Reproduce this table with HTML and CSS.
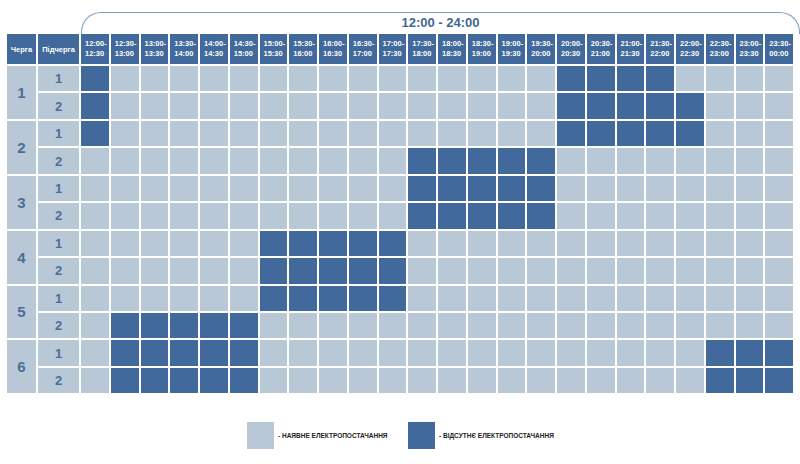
FILE: index.html
```html
<!DOCTYPE html>
<html lang="uk">
<head>
<meta charset="utf-8">
<link rel="stylesheet" href="styles.css">
</head>
<body>
<div class="page">
  <div class="bracket-row">
    <div class="bracket">12:00 - 24:00</div>
  </div>
  <div class="grid">
    <div class="h h-main">Черга</div>
    <div class="h h-main">Підчерга</div>
    <div class="h t">12:00-<br>12:30</div>
    <div class="h t">12:30-<br>13:00</div>
    <div class="h t">13:00-<br>13:30</div>
    <div class="h t">13:30-<br>14:00</div>
    <div class="h t">14:00-<br>14:30</div>
    <div class="h t">14:30-<br>15:00</div>
    <div class="h t">15:00-<br>15:30</div>
    <div class="h t">15:30-<br>16:00</div>
    <div class="h t">16:00-<br>16:30</div>
    <div class="h t">16:30-<br>17:00</div>
    <div class="h t">17:00-<br>17:30</div>
    <div class="h t">17:30-<br>18:00</div>
    <div class="h t">18:00-<br>18:30</div>
    <div class="h t">18:30-<br>19:00</div>
    <div class="h t">19:00-<br>19:30</div>
    <div class="h t">19:30-<br>20:00</div>
    <div class="h t">20:00-<br>20:30</div>
    <div class="h t">20:30-<br>21:00</div>
    <div class="h t">21:00-<br>21:30</div>
    <div class="h t">21:30-<br>22:00</div>
    <div class="h t">22:00-<br>22:30</div>
    <div class="h t">22:30-<br>23:00</div>
    <div class="h t">23:00-<br>23:30</div>
    <div class="h t">23:30-<br>00:00</div>

    <!-- 1.1 -->
    <div class="q">1</div>
    <div class="s">1</div>
    <span class="off"></span>
    <span class="on"></span><span class="on"></span><span class="on"></span><span class="on"></span><span class="on"></span>
    <span class="on"></span><span class="on"></span><span class="on"></span><span class="on"></span><span class="on"></span>
    <span class="on"></span><span class="on"></span><span class="on"></span><span class="on"></span><span class="on"></span>
    <span class="off"></span><span class="off"></span><span class="off"></span><span class="off"></span>
    <span class="on"></span><span class="on"></span><span class="on"></span><span class="on"></span>
    <!-- 1.2 -->
    <div class="s">2</div>
    <span class="off"></span>
    <span class="on"></span><span class="on"></span><span class="on"></span><span class="on"></span><span class="on"></span>
    <span class="on"></span><span class="on"></span><span class="on"></span><span class="on"></span><span class="on"></span>
    <span class="on"></span><span class="on"></span><span class="on"></span><span class="on"></span><span class="on"></span>
    <span class="off"></span><span class="off"></span><span class="off"></span><span class="off"></span><span class="off"></span>
    <span class="on"></span><span class="on"></span><span class="on"></span>

    <!-- 2.1 -->
    <div class="q">2</div>
    <div class="s">1</div>
    <span class="off"></span>
    <span class="on"></span><span class="on"></span><span class="on"></span><span class="on"></span><span class="on"></span>
    <span class="on"></span><span class="on"></span><span class="on"></span><span class="on"></span><span class="on"></span>
    <span class="on"></span><span class="on"></span><span class="on"></span><span class="on"></span><span class="on"></span>
    <span class="off"></span><span class="off"></span><span class="off"></span><span class="off"></span><span class="off"></span>
    <span class="on"></span><span class="on"></span><span class="on"></span>
    <!-- 2.2 -->
    <div class="s">2</div>
    <span class="on"></span><span class="on"></span><span class="on"></span><span class="on"></span><span class="on"></span>
    <span class="on"></span><span class="on"></span><span class="on"></span><span class="on"></span><span class="on"></span><span class="on"></span>
    <span class="off"></span><span class="off"></span><span class="off"></span><span class="off"></span><span class="off"></span>
    <span class="on"></span><span class="on"></span><span class="on"></span><span class="on"></span>
    <span class="on"></span><span class="on"></span><span class="on"></span><span class="on"></span>

    <!-- 3.1 -->
    <div class="q">3</div>
    <div class="s">1</div>
    <span class="on"></span><span class="on"></span><span class="on"></span><span class="on"></span><span class="on"></span>
    <span class="on"></span><span class="on"></span><span class="on"></span><span class="on"></span><span class="on"></span><span class="on"></span>
    <span class="off"></span><span class="off"></span><span class="off"></span><span class="off"></span><span class="off"></span>
    <span class="on"></span><span class="on"></span><span class="on"></span><span class="on"></span>
    <span class="on"></span><span class="on"></span><span class="on"></span><span class="on"></span>
    <!-- 3.2 -->
    <div class="s">2</div>
    <span class="on"></span><span class="on"></span><span class="on"></span><span class="on"></span><span class="on"></span>
    <span class="on"></span><span class="on"></span><span class="on"></span><span class="on"></span><span class="on"></span><span class="on"></span>
    <span class="off"></span><span class="off"></span><span class="off"></span><span class="off"></span><span class="off"></span>
    <span class="on"></span><span class="on"></span><span class="on"></span><span class="on"></span>
    <span class="on"></span><span class="on"></span><span class="on"></span><span class="on"></span>

    <!-- 4.1 -->
    <div class="q">4</div>
    <div class="s">1</div>
    <span class="on"></span><span class="on"></span><span class="on"></span><span class="on"></span><span class="on"></span><span class="on"></span>
    <span class="off"></span><span class="off"></span><span class="off"></span><span class="off"></span><span class="off"></span>
    <span class="on"></span><span class="on"></span><span class="on"></span><span class="on"></span><span class="on"></span><span class="on"></span><span class="on"></span>
    <span class="on"></span><span class="on"></span><span class="on"></span><span class="on"></span><span class="on"></span><span class="on"></span>
    <!-- 4.2 -->
    <div class="s">2</div>
    <span class="on"></span><span class="on"></span><span class="on"></span><span class="on"></span><span class="on"></span><span class="on"></span>
    <span class="off"></span><span class="off"></span><span class="off"></span><span class="off"></span><span class="off"></span>
    <span class="on"></span><span class="on"></span><span class="on"></span><span class="on"></span><span class="on"></span><span class="on"></span><span class="on"></span>
    <span class="on"></span><span class="on"></span><span class="on"></span><span class="on"></span><span class="on"></span><span class="on"></span>

    <!-- 5.1 -->
    <div class="q">5</div>
    <div class="s">1</div>
    <span class="on"></span><span class="on"></span><span class="on"></span><span class="on"></span><span class="on"></span><span class="on"></span>
    <span class="off"></span><span class="off"></span><span class="off"></span><span class="off"></span><span class="off"></span>
    <span class="on"></span><span class="on"></span><span class="on"></span><span class="on"></span><span class="on"></span><span class="on"></span><span class="on"></span>
    <span class="on"></span><span class="on"></span><span class="on"></span><span class="on"></span><span class="on"></span><span class="on"></span>
    <!-- 5.2 -->
    <div class="s">2</div>
    <span class="on"></span>
    <span class="off"></span><span class="off"></span><span class="off"></span><span class="off"></span><span class="off"></span>
    <span class="on"></span><span class="on"></span><span class="on"></span><span class="on"></span><span class="on"></span><span class="on"></span>
    <span class="on"></span><span class="on"></span><span class="on"></span><span class="on"></span><span class="on"></span><span class="on"></span>
    <span class="on"></span><span class="on"></span><span class="on"></span><span class="on"></span><span class="on"></span><span class="on"></span>

    <!-- 6.1 -->
    <div class="q">6</div>
    <div class="s">1</div>
    <span class="on"></span>
    <span class="off"></span><span class="off"></span><span class="off"></span><span class="off"></span><span class="off"></span>
    <span class="on"></span><span class="on"></span><span class="on"></span><span class="on"></span><span class="on"></span>
    <span class="on"></span><span class="on"></span><span class="on"></span><span class="on"></span><span class="on"></span>
    <span class="on"></span><span class="on"></span><span class="on"></span><span class="on"></span><span class="on"></span>
    <span class="off"></span><span class="off"></span><span class="off"></span>
    <!-- 6.2 -->
    <div class="s">2</div>
    <span class="on"></span>
    <span class="off"></span><span class="off"></span><span class="off"></span><span class="off"></span><span class="off"></span>
    <span class="on"></span><span class="on"></span><span class="on"></span><span class="on"></span><span class="on"></span>
    <span class="on"></span><span class="on"></span><span class="on"></span><span class="on"></span><span class="on"></span>
    <span class="on"></span><span class="on"></span><span class="on"></span><span class="on"></span><span class="on"></span>
    <span class="off"></span><span class="off"></span><span class="off"></span>
  </div>

  <div class="legend">
    <div class="legend-item">
      <span class="swatch on"></span>
      <span class="legend-text">- НАЯВНЕ ЕЛЕКТРОПОСТАЧАННЯ</span>
    </div>
    <div class="legend-item">
      <span class="swatch off"></span>
      <span class="legend-text">- ВІДСУТНЄ ЕЛЕКТРОПОСТАЧАННЯ</span>
    </div>
  </div>
</div>
</body>
</html>
```

FILE: styles.css
```css
* { box-sizing: border-box; }

html, body {
  margin: 0;
  padding: 0;
  background: #ffffff;
}

body {
  font-family: "Liberation Sans", Arial, sans-serif;
  width: 800px;
  height: 464px;
  overflow: hidden;
}

.page {
  padding: 12px 0 0 7px;
}

.bracket-row {
  padding-left: 74px;
  width: 793px;
}

.bracket {
  height: 22px;
  border: 1px solid #7f9dc0;
  border-bottom: none;
  border-radius: 20px 20px 0 0;
  text-align: center;
  color: #3f6794;
  font-weight: bold;
  font-size: 13px;
  line-height: 18px;
  padding-top: 1px;
}

.grid {
  display: grid;
  grid-template-columns: 29px 41px repeat(24, 27.75px);
  grid-template-rows: 30px repeat(12, 25.45px);
  gap: 2px;
}

.h {
  background: #41699b;
  color: #ffffff;
  font-weight: bold;
}

.h-main {
  display: flex;
  align-items: center;
  justify-content: center;
  font-size: 7.5px;
}

.t {
  font-size: 7.5px;
  line-height: 10px;
  padding: 5px 0 0 4px;
}

.q, .s {
  background: #b9c8d7;
  color: #4b6d96;
  font-weight: bold;
  display: flex;
  align-items: center;
  justify-content: center;
}

.q {
  grid-row: span 2;
  font-size: 15px;
}

.s {
  font-size: 13px;
}

.on { background: #b9c8d7; }
.off { background: #41699b; }

.legend {
  display: flex;
  padding: 29px 0 0 240px;
}

.legend-item {
  display: flex;
  align-items: center;
}

.swatch {
  display: block;
  width: 27px;
  height: 27px;
}

.legend-text {
  font-size: 6.5px;
  font-weight: bold;
  color: #222222;
  margin-left: 4px;
  width: 130px;
}
```
